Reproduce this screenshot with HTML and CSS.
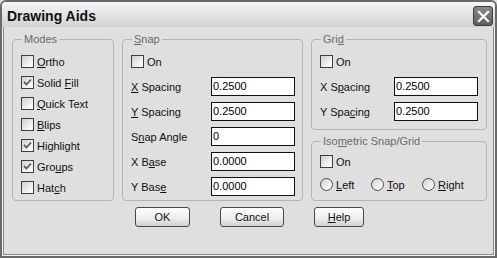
FILE: index.html
```html
<!DOCTYPE html>
<html lang="en">
  <head>
    <meta charset="UTF-8" />
    <link rel="stylesheet" href="styles.css">
    <title>Drawing Aids</title>
  </head>
  <body>
    <div class="window">
      <div class="titlebar">
        <span class="title">Drawing Aids</span>
        <span class="close">
          <svg width="13" height="13" viewBox="0 0 13 13">
            <path d="M2 2 L11 11 M11 2 L2 11" stroke="#fff" stroke-width="2.2" stroke-linecap="square" />
          </svg>
        </span>
      </div>

      <div class="content">
        <div class="groups">
          <fieldset class="group modes">
            <legend>Modes</legend>
            <div class="check-row"><span class="box"></span><span><u>O</u>rtho</span></div>
            <div class="check-row"><span class="box checked"><svg width="11" height="11" viewBox="0 0 11 11"><path d="M2 5 L4.5 7.5 L9 2.5" fill="none" stroke="#5c5c5c" stroke-width="1.8" /></svg></span><span>Solid <u>F</u>ill</span></div>
            <div class="check-row"><span class="box"></span><span><u>Q</u>uick Text</span></div>
            <div class="check-row"><span class="box"></span><span><u>B</u>lips</span></div>
            <div class="check-row"><span class="box checked"><svg width="11" height="11" viewBox="0 0 11 11"><path d="M2 5 L4.5 7.5 L9 2.5" fill="none" stroke="#5c5c5c" stroke-width="1.8" /></svg></span><span>Highlight</span></div>
            <div class="check-row"><span class="box checked"><svg width="11" height="11" viewBox="0 0 11 11"><path d="M2 5 L4.5 7.5 L9 2.5" fill="none" stroke="#5c5c5c" stroke-width="1.8" /></svg></span><span>Gro<u>u</u>ps</span></div>
            <div class="check-row"><span class="box"></span><span>Hat<u>c</u>h</span></div>
          </fieldset>

          <fieldset class="group snap">
            <legend><u>S</u>nap</legend>
            <div class="check-row first"><span class="box"></span><span>On</span></div>
            <div class="field-row"><span class="label"><u>X</u> Spacing</span><span class="input">0.2500</span></div>
            <div class="field-row"><span class="label"><u>Y</u> Spacing</span><span class="input">0.2500</span></div>
            <div class="field-row"><span class="label">S<u>n</u>ap Angle</span><span class="input">0</span></div>
            <div class="field-row"><span class="label">X B<u>a</u>se</span><span class="input">0.0000</span></div>
            <div class="field-row"><span class="label">Y Bas<u>e</u></span><span class="input">0.0000</span></div>
          </fieldset>

          <div class="column">
            <fieldset class="group grid">
              <legend>Gri<u>d</u></legend>
              <div class="check-row first"><span class="box"></span><span>On</span></div>
              <div class="field-row"><span class="label">X S<u>p</u>acing</span><span class="input">0.2500</span></div>
              <div class="field-row"><span class="label">Y Spa<u>c</u>ing</span><span class="input">0.2500</span></div>
            </fieldset>

            <fieldset class="group iso">
              <legend>Iso<u>m</u>etric Snap/Grid</legend>
              <div class="check-row first"><span class="box"></span><span>On</span></div>
              <div class="radio-row">
                <span class="radio-item left"><span class="radio"></span><span><u>L</u>eft</span></span>
                <span class="radio-item top"><span class="radio"></span><span><u>T</u>op</span></span>
                <span class="radio-item"><span class="radio"></span><span><u>R</u>ight</span></span>
              </div>
            </fieldset>
          </div>
        </div>

        <div class="buttons">
          <button class="btn ok">OK</button>
          <button class="btn cancel">Cancel</button>
          <button class="btn help"><u>H</u>elp</button>
        </div>
      </div>
    </div>
  </body>
</html>
```

FILE: styles.css
```css
body {
  margin: 0;
  padding: 0;
  font-family: "Liberation Sans", Arial, sans-serif;
  font-size: 11px;
  color: #111;
  background: #dfdfdf;
}

.window {
  box-sizing: border-box;
  width: 497px;
  height: 258px;
  border: 2px solid #6a6a6a;
  border-radius: 6px 6px 0 0;
  box-shadow: inset 0 0 0 1px #f2f2f2, inset 0 0 0 2px #8a8a8a;
  background: #dfdfdf;
}

.titlebar {
  height: 25px;
  display: flex;
  align-items: center;
  justify-content: space-between;
  padding: 0 2px 0 5px;
  background: linear-gradient(to bottom, #f6f6f6, #e4e4e4 50%, #d2d2d2);
  border-radius: 4px 4px 0 0;
}

.title {
  font-weight: bold;
  font-size: 14px;
  color: #111;
  margin-top: 2px;
}

.close {
  box-sizing: border-box;
  width: 20px;
  height: 20px;
  margin-top: 3px;
  border: 1px solid #3c3c3c;
  border-radius: 3px;
  background: linear-gradient(to bottom, #8a8a8a, #5e5e5e);
  display: flex;
  align-items: center;
  justify-content: center;
}

.content {
  padding: 6px 8px 0 10px;
}

.groups {
  display: flex;
  gap: 8px;
}

.group {
  margin: 0;
  border: 1px solid #b4b4b4;
  border-radius: 4px;
  box-sizing: border-box;
  padding: 0 7px 0 8px;
}

.group legend {
  color: #6a6a6a;
  padding: 0 2px;
  margin-left: 1px;
  line-height: 13px;
}

.modes {
  width: 102px;
  height: 168px;
  padding-top: 5px;
}

.snap {
  width: 181px;
  height: 168px;
  padding-top: 5px;
}

.column {
  display: flex;
  flex-direction: column;
  gap: 5px;
}

.grid {
  width: 176px;
  height: 97px;
  padding-top: 5px;
}

.iso {
  width: 176px;
  height: 66px;
  padding-top: 3px;
}

.check-row {
  height: 21px;
  display: flex;
  align-items: center;
}

.check-row.first {
  margin-bottom: 2px;
}

.box {
  box-sizing: border-box;
  width: 13px;
  height: 13px;
  border: 1px solid #3e3e3e;
  background: linear-gradient(to bottom right, #cfcfcf, #f4f4f4 70%, #ffffff);
  margin-right: 3px;
  display: flex;
  align-items: center;
  justify-content: center;
}

.field-row {
  height: 25px;
  display: flex;
  align-items: center;
  justify-content: space-between;
}

.input {
  box-sizing: border-box;
  width: 84px;
  height: 19px;
  border: 1px solid #111;
  background: #fff;
  padding-left: 1px;
  line-height: 17px;
  color: #000;
}

.grid .input {
  margin-right: 1px;
}

.radio-row {
  height: 21px;
  display: flex;
  align-items: center;
}

.radio-item {
  display: flex;
  align-items: center;
}

.radio-item.left {
  width: 51px;
}

.radio-item.top {
  width: 51px;
}

.radio {
  box-sizing: border-box;
  width: 13px;
  height: 13px;
  border: 1px solid #4a4a4a;
  border-radius: 50%;
  background: linear-gradient(to bottom right, #cfcfcf, #f4f4f4 70%, #ffffff);
  margin-right: 3px;
}

.buttons {
  display: flex;
  justify-content: center;
  gap: 30px;
  margin-top: 6px;
}

.btn {
  box-sizing: border-box;
  height: 20px;
  font-family: "Liberation Sans", Arial, sans-serif;
  font-size: 11px;
  color: #111;
  border: 1px solid #4a4a4a;
  border-radius: 3px;
  background: linear-gradient(to bottom, #ffffff, #ececec 60%, #cfcfcf);
  padding: 0;
}

.ok {
  width: 55px;
}

.cancel {
  width: 64px;
}

.help {
  width: 50px;
}
```
